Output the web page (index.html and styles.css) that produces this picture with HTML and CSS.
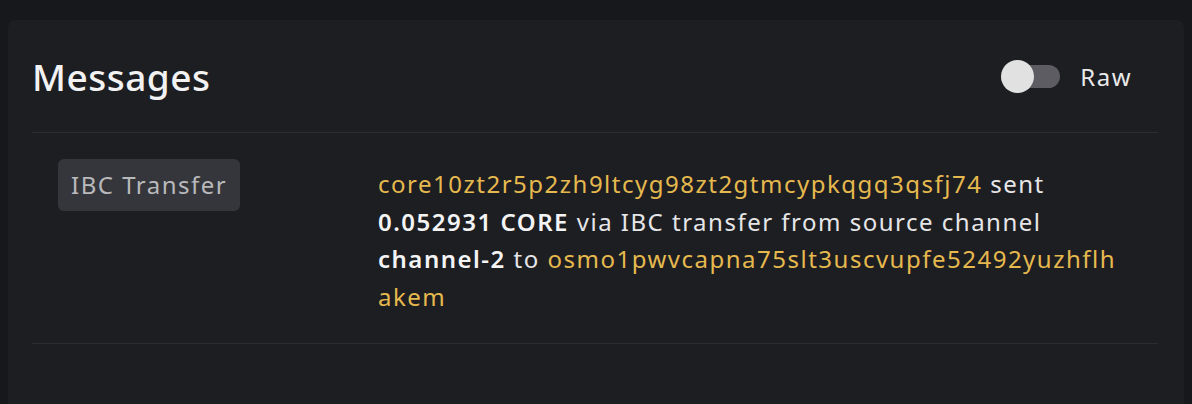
FILE: index.html
```html
<!DOCTYPE html>
<html>
<head>
<meta charset="utf-8">
<link rel="stylesheet" href="styles.css">
</head>
<body>
<section class="card">
  <header class="card-header">
    <h2 class="title">Messages</h2>
    <label class="raw-toggle">
      <span class="switch"><span class="knob"></span></span>
      <span class="raw-label">Raw</span>
    </label>
  </header>
  <div class="msg-row">
    <div class="msg-type"><span class="badge">IBC Transfer</span></div>
    <div class="msg-text"><span class="addr">core10zt2r5p2zh9ltcyg98zt2gtmcypkqgq3qsfj74</span> sent <strong>0.052931 CORE</strong> via IBC transfer from source channel <strong>channel-2</strong> to <span class="addr">osmo1pwvcapna75slt3uscvupfe52492yuzhflhakem</span></div>
  </div>
</section>
</body>
</html>
```

FILE: styles.css
```css
* { box-sizing: border-box; }
html, body { margin: 0; padding: 0; }
body {
  background: #17181c;
  font-family: "Noto Sans", "Open Sans", sans-serif;
  color: #e8e8ea;
  padding: 20px 8px 0 8px;
  height: 404px;
  overflow: hidden;
}
.card {
  background: #1d1e22;
  border-radius: 8px;
  padding: 0 26px 0 24px;
  height: 400px;
}
.card-header {
  display: flex;
  align-items: center;
  justify-content: space-between;
  height: 113px;
  padding-top: 1px;
  border-bottom: 1px solid #2b2c31;
}
.title {
  margin: 0;
  font-size: 37px;
  font-weight: 500;
  color: #f2f2f3;
  letter-spacing: 0.5px;
}
.raw-toggle {
  display: flex;
  align-items: center;
  gap: 20px;
  margin-right: 26px;
}
.switch {
  position: relative;
  display: block;
  width: 59px;
  height: 23px;
  border-radius: 12px;
  background: #5d5c62;
}
.knob {
  position: absolute;
  left: 0;
  top: -5px;
  width: 33px;
  height: 33px;
  border-radius: 50%;
  background: #e1e1e1;
}
.raw-label {
  font-size: 24px;
  letter-spacing: 1.5px;
  color: #e9e9ea;
}
.msg-row {
  display: grid;
  grid-template-columns: 320px 746px;
  padding: 26px 26px 27px 26px;
  border-bottom: 1px solid #2b2c31;
}
.badge {
  display: inline-block;
  background: #35363b;
  color: #b9b9bc;
  font-size: 24px;
  letter-spacing: 1.5px;
  line-height: 28px;
  padding: 12px 13px 12px 13px;
  border-radius: 6px;
}
.msg-text {
  font-size: 24px;
  letter-spacing: 1.5px;
  line-height: 37.7px;
  color: #e6e6e8;
  margin-top: 6px;
}
.msg-text strong {
  font-weight: 600;
  color: #f4f4f5;
}
.addr {
  color: #e6b94e;
  word-break: break-all;
}
```
